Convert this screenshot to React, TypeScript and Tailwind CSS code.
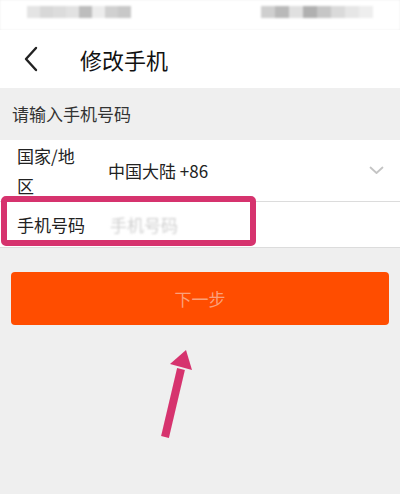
import React from 'react';

const font = { fontFamily: '"Noto Sans CJK SC", "Noto Sans", sans-serif' };

function StatusBar() {
  // blurred status icons, as in the screenshot
  const left = ['#e4e4e4', '#d8d8d8', '#dcdcdc', '#e2e2e2', '#bdbdbd', '#ececec', '#d0d0d0', '#c8c8c8'];
  const right = ['#cfcfcf', '#b9b9b9', '#e0e0e0', '#b0b0b0', '#c6c6c6', '#dadada', '#e6e6e6', '#eeeeee'];
  return (
    <div className="h-[30px] bg-white flex items-start justify-between pt-[6px] pl-[27px] pr-[27px] blur-[1px]">
      <div className="flex h-[12px]">
        {left.map((c, i) => (
          <div key={i} className="w-[13px] h-full" style={{ background: c }} />
        ))}
      </div>
      <div className="flex h-[12px]">
        {right.map((c, i) => (
          <div key={i} className="w-[14px] h-full" style={{ background: c }} />
        ))}
      </div>
    </div>
  );
}

export default function App() {
  return (
    <div className="relative w-[400px] h-[494px] bg-[#efefef] overflow-hidden" style={font}>
      <StatusBar />

      {/* header */}
      <div className="h-[58px] bg-white flex items-center">
        <div className="w-[80px] pl-[22px] flex items-center">
          <svg width="18" height="26" viewBox="0 0 18 26" fill="none">
            <path d="M14 2 L4 13 L14 24" stroke="#222" strokeWidth="2.4" strokeLinecap="round" strokeLinejoin="round" />
          </svg>
        </div>
        <span className="text-[22px] text-[#111] leading-none">修改手机</span>
      </div>

      {/* section title */}
      <div className="h-[52px] flex items-center pl-[12px] text-[17px] text-[#333]">请输入手机号码</div>

      {/* form */}
      <div className="bg-white">
        <div className="h-[62px] flex items-center border-b border-[#dcdcdc]">
          <div className="w-[62px] ml-[17px] text-[17px] leading-[30px] text-[#222]">国家/地区</div>
          <div className="ml-[29px] flex-1 text-[17px] text-[#222]">中国大陆 +86</div>
          <svg className="mr-[16px]" width="15" height="9" viewBox="0 0 15 9" fill="none">
            <path d="M1.5 1.5 L7.5 7 L13.5 1.5" stroke="#c4c4c4" strokeWidth="1.8" strokeLinecap="round" strokeLinejoin="round" />
          </svg>
        </div>
        <div className="h-[46px] flex items-center border-b border-[#dcdcdc]">
          <div className="w-[70px] ml-[17px] text-[17px] text-[#222]">手机号码</div>
          <div className="ml-[23px] text-[17px] text-[#d0d0d0] blur-[1px]">手机号码</div>
        </div>
      </div>

      {/* next button */}
      <div className="px-[11px] pt-[24px]">
        <div className="h-[53px] rounded-[4px] bg-[#ff4d00] flex items-center justify-center text-[17px] text-[#fba07a]">
          下一步
        </div>
      </div>

      {/* annotation: highlight box */}
      <div className="absolute left-[1px] top-[196px] w-[255px] h-[50px] border-[6px] border-[#d6336e] rounded-[5px]" />

      {/* annotation: arrow */}
      <svg className="absolute left-0 top-0" width="400" height="494" viewBox="0 0 400 494">
        <path d="M165 437 L181 369" stroke="#d6336e" strokeWidth="8" />
        <polygon points="186,350 170,364 192,370" fill="#d6336e" />
      </svg>
    </div>
  );
}
